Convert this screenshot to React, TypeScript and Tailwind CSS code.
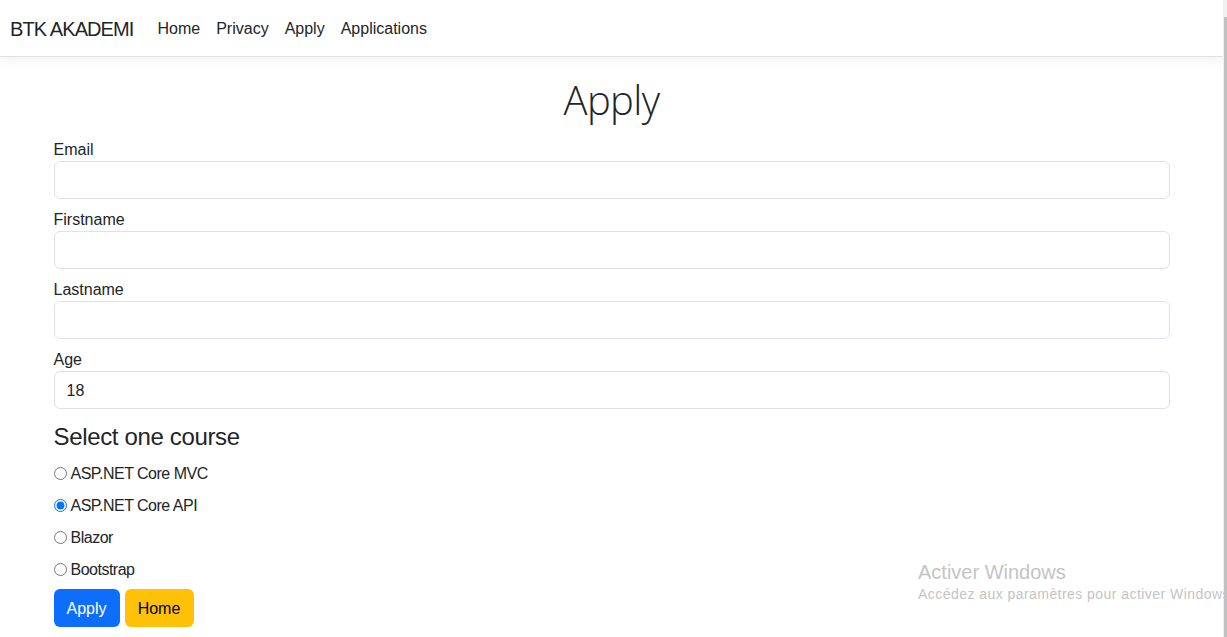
import React from "react";

const font = { fontFamily: '"Segoe UI", "Liberation Sans", Arial, sans-serif' };

function Field({ label, value }: { label: string; value?: string }) {
  return (
    <div className="mb-[8px]">
      <label className="block text-[16px] leading-[22px] pt-[2px] text-[#212529]">{label}</label>
      <input
        readOnly
        value={value ?? ""}
        className="block w-full h-[38px] rounded-[6px] border border-[#dee2e6] bg-white px-[12px] pt-[2px] text-[16px] text-[#212529] outline-none"
      />
    </div>
  );
}

export default function App() {
  const courses = ["ASP.NET Core MVC", "ASP.NET Core API", "Blazor", "Bootstrap"];
  return (
    <div
      className="relative flex w-[1227px] h-[637px] overflow-hidden bg-white text-[#212529]"
      style={font}
    >
      <div className="flex-1 flex flex-col min-w-0">
        <nav className="h-[57px] shrink-0 border-b border-[#dee2e6] bg-white shadow-[0_4px_12px_rgba(0,0,0,0.05)] flex items-center px-[10px] pt-[2px]">
          <span className="text-[20px] leading-[30px] tracking-[-0.9px] text-[#212529] mr-[16px]">BTK AKADEMI</span>
          <ul className="flex items-center">
            {["Home", "Privacy", "Apply", "Applications"].map((l) => (
              <li key={l} className="px-[8px] text-[16px] leading-[24px] text-[#212529]">
                {l}
              </li>
            ))}
          </ul>
        </nav>
        <main className="w-[1140px] mx-auto px-[12px]">
          <h1
            className="text-center text-[40px] leading-[48px] font-light tracking-[-0.6px] mt-[19px] mb-[13px]"
            style={{ fontFamily: '"Segoe UI Light", "Open Sans", "Noto Sans", sans-serif' }}
          >
            Apply
          </h1>
          <Field label="Email" />
          <Field label="Firstname" />
          <Field label="Lastname" />
          <Field label="Age" value="18" />
          <h4 className="text-[24px] leading-[29px] tracking-[-0.35px] mt-[13px] mb-[10px]">Select one course</h4>
          {courses.map((c, i) => (
            <div key={c} className="flex items-center h-[24px] mb-[8px] text-[16px]">
              <input
                type="radio"
                name="course"
                readOnly
                checked={i === 1}
                className="m-0 mr-[4px] w-[13px] h-[13px]"
              />
              <span className="pt-[2px] tracking-[-0.5px]">{c}</span>
            </div>
          ))}
          <div className="flex gap-[5px]">
            <button className="h-[38px] w-[66px] rounded-[6px] bg-[#0d6efd] text-white text-[16px] pt-[2px]">Apply</button>
            <button className="h-[38px] w-[69px] rounded-[6px] bg-[#ffc107] text-black text-[16px] pt-[2px]">Home</button>
          </div>
        </main>
      </div>
      <div className="w-[4px] shrink-0 bg-[#f1f1f1] pt-[17px] flex justify-center">
        <div className="w-[3px] h-full bg-[#c1c1c1]" />
      </div>
      <div className="absolute left-[918px] top-[559px] text-[#c4c4c4] whitespace-nowrap pointer-events-none">
        <div className="text-[20px] leading-[26px]">Activer Windows</div>
        <div className="text-[14px] leading-[18px] tracking-[0.45px]">Accédez aux paramètres pour activer Windows</div>
      </div>
    </div>
  );
}
